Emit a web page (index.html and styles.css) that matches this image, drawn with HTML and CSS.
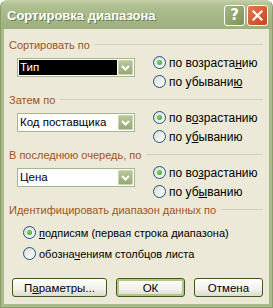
FILE: index.html
```html
<!DOCTYPE html>
<html lang="ru">
<head>
  <meta charset="UTF-8">
  <title>Сортировка диапазона</title>
  <link rel="stylesheet" href="styles.css">
</head>
<body>
  <div class="window">
    <div class="titlebar">
      <span class="title">Сортировка диапазона</span>
      <span class="cap-btn help">?</span>
      <span class="cap-btn close">
        <svg width="11" height="11" viewBox="0 0 11 11"><path d="M1.5 1.5 L9.5 9.5 M9.5 1.5 L1.5 9.5" stroke="#fff" stroke-width="2.2" stroke-linecap="square"/></svg>
      </span>
    </div>

    <div class="client">
      <div class="group">
        <div class="group-title">Сортировать по</div>
        <div class="group-body">
          <div class="combo">
            <span class="combo-text selected">Тип</span>
            <span class="combo-btn"><svg width="9" height="6" viewBox="0 0 9 6"><path d="M1 1 L4.5 4.5 L8 1" stroke="#fff" stroke-width="2" fill="none"/></svg></span>
          </div>
          <div class="radios">
            <div class="radio checked"><span class="circle"></span><span>по возраста<u>н</u>ию</span></div>
            <div class="radio"><span class="circle"></span><span>по убывани<u>ю</u></span></div>
          </div>
        </div>
      </div>

      <div class="group">
        <div class="group-title">Затем по</div>
        <div class="group-body">
          <div class="combo">
            <span class="combo-text">Код поставщика</span>
            <span class="combo-btn"><svg width="9" height="6" viewBox="0 0 9 6"><path d="M1 1 L4.5 4.5 L8 1" stroke="#fff" stroke-width="2" fill="none"/></svg></span>
          </div>
          <div class="radios">
            <div class="radio checked"><span class="circle"></span><span>по в<u>о</u>зрастанию</span></div>
            <div class="radio"><span class="circle"></span><span>по у<u>б</u>ыванию</span></div>
          </div>
        </div>
      </div>

      <div class="group">
        <div class="group-title">В последнюю очередь, по</div>
        <div class="group-body">
          <div class="combo">
            <span class="combo-text">Цена</span>
            <span class="combo-btn"><svg width="9" height="6" viewBox="0 0 9 6"><path d="M1 1 L4.5 4.5 L8 1" stroke="#fff" stroke-width="2" fill="none"/></svg></span>
          </div>
          <div class="radios">
            <div class="radio checked"><span class="circle"></span><span>по во<u>з</u>растанию</span></div>
            <div class="radio"><span class="circle"></span><span>по уб<u>ы</u>ванию</span></div>
          </div>
        </div>
      </div>

      <div class="group">
        <div class="group-title">Идентифицировать диапазон данных по</div>
        <div class="radios wide">
          <div class="radio checked"><span class="circle"></span><span><u>п</u>одписям (первая строка диапазона)</span></div>
          <div class="radio"><span class="circle"></span><span>обозна<u>ч</u>ениям столбцов листа</span></div>
        </div>
      </div>

      <div class="buttons">
        <button class="btn params">П<u>а</u>раметры...</button>
        <button class="btn default">ОК</button>
        <button class="btn">Отмена</button>
      </div>
    </div>
  </div>
</body>
</html>
```

FILE: styles.css
```css
* {
  margin: 0;
  padding: 0;
  box-sizing: border-box;
}

body {
  background: #fff;
  font-family: "Liberation Sans", Arial, sans-serif;
  font-size: 11px;
}

.window {
  width: 273px;
  height: 308px;
  display: flex;
  flex-direction: column;
  background: #a8b98a;
  border-radius: 7px 7px 0 0;
  border: 1px solid #8a9c68;
  border-top-color: #c4cfa8;
}

.titlebar {
  height: 28px;
  display: flex;
  align-items: center;
  gap: 2px;
  padding: 0 4px 0 6px;
  border-radius: 6px 6px 0 0;
  background: linear-gradient(#c3cea4 0, #b2c292 3px, #a8b98a 12px, #9eb07e 100%);
}

.title {
  flex: 1;
  color: #fff;
  font-weight: bold;
  font-size: 13px;
  text-shadow: 1px 1px 0 #6b7b4d;
}

.cap-btn {
  width: 21px;
  height: 21px;
  border: 1px solid #fff;
  border-radius: 3px;
  display: flex;
  align-items: center;
  justify-content: center;
  color: #fff;
  font-family: "DejaVu Sans", sans-serif;
  font-weight: bold;
  font-size: 15px;
}

.help {
  background: linear-gradient(135deg, #a6b882, #7c9256);
}

.close {
  background: linear-gradient(135deg, #e6764f, #c8441c);
}

.client {
  flex: 1;
  margin: 0 3px 3px 3px;
  background: #ece9d8;
  display: flex;
  flex-direction: column;
  gap: 3px;
  padding: 9px 6px 7px 5px;
}

.group-title {
  height: 13px;
  display: flex;
  align-items: center;
  gap: 5px;
  color: #a0531a;
  white-space: nowrap;
}

.group-title::after {
  content: "";
  flex: 1;
  border-top: 1px solid #d0d0bf;
}

.group-body {
  display: flex;
  gap: 18px;
  padding-left: 8px;
  margin-top: 3px;
}

.group-body .radio {
  font-size: 12px;
}

.combo {
  width: 118px;
  height: 19px;
  margin-top: 4px;
  background: #fff;
  border: 1px solid #a5b88c;
  display: flex;
  padding: 1px;
}

.combo-text {
  flex: 1;
  padding-left: 1px;
  line-height: 15px;
  margin-right: 1px;
  font-size: 11.5px;
  white-space: nowrap;
  overflow: hidden;
}

.combo-text.selected {
  background: #000;
  color: #fff;
}

.combo-btn {
  width: 15px;
  height: 15px;
  border: 1px solid #c9d5b2;
  border-radius: 1px;
  background: linear-gradient(#b8c79d, #97aa74);
  display: flex;
  align-items: center;
  justify-content: center;
}

.radios {
  display: flex;
  flex-direction: column;
  gap: 2px;
}

.radios.wide {
  padding-left: 14px;
  margin-top: 8px;
  gap: 4px;
}

.radio {
  height: 17px;
  display: flex;
  align-items: center;
  gap: 3px;
  white-space: nowrap;
}

.circle {
  width: 13px;
  height: 13px;
  border-radius: 50%;
  border: 1px solid #1c5180;
  background: linear-gradient(135deg, #dcdcd3, #fff);
  display: flex;
  align-items: center;
  justify-content: center;
}

.radio.checked .circle::after {
  content: "";
  width: 5px;
  height: 5px;
  border-radius: 50%;
  background: radial-gradient(circle at 40% 40%, #7ed86c, #2f9a22);
}

u {
  text-decoration: underline;
  text-underline-offset: 1px;
}

.buttons {
  margin-top: auto;
  display: flex;
  gap: 9px;
  padding-left: 3px;
}

.btn {
  width: 69px;
  height: 19px;
  font-family: "Liberation Sans", Arial, sans-serif;
  font-size: 11.5px;
  color: #000;
  border: 1px solid #3d5a1e;
  border-radius: 3px;
  background: linear-gradient(#fff, #f1f0ea 60%, #dcdad0);
}

.btn.params {
  width: 95px;
}

.btn.default {
  box-shadow: inset 0 0 0 2px #b4c67f;
}
```
